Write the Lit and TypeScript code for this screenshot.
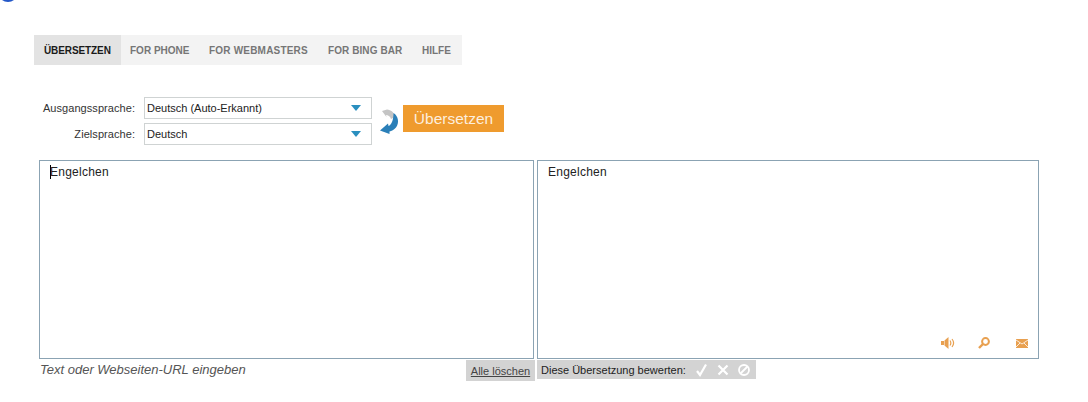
import { LitElement, html, css } from "lit";
import { customElement } from "lit/decorators.js";

@customElement("app-root")
export class AppRoot extends LitElement {
  static styles = css`
    :host { display: block; width: 1088px; height: 402px; overflow: hidden; position: relative; background: #fff; font-family: "Liberation Sans", Arial, sans-serif; color: #222; }
    .logo { position: absolute; left: -2px; top: -18px; width: 20px; height: 20px; border-radius: 50%; background: #2458c8; }
    .page { display: flex; flex-direction: column; padding: 35px 0 0 34px; }
    .tabs { display: flex; align-self: flex-start; background: #f3f3f3; height: 30px; }
    .tab { box-sizing: border-box; display: flex; align-items: center; font-size: 10px; font-weight: 700; color: #767676; white-space: nowrap; }
    .tab.active { background: #e3e3e3; color: #1a1a1a; width: 87px; padding-left: 10px; letter-spacing: -0.1px; }
    .phone { width: 78px; padding-left: 9px; }
    .web { width: 120px; padding-left: 10px; letter-spacing: 0.2px; }
    .bing { width: 93px; padding-left: 9px; letter-spacing: 0.08px; }
    .help { width: 50px; padding-left: 10px; }
    .form { display: flex; margin: 32px 0 0 0; height: 48px; }
    .labels { display: flex; flex-direction: column; gap: 4px; width: 101px; }
    .labels span { height: 22px; line-height: 22px; text-align: right; font-size: 11px; color: #333; letter-spacing: 0.06px; }
    .selects { display: flex; flex-direction: column; gap: 4px; margin-left: 9px; width: 228px; }
    .select { box-sizing: border-box; height: 22px; border: 1px solid #cfd3d3; display: flex; align-items: center; justify-content: space-between; padding: 0 10px 0 2px; font-size: 11px; color: #222; }
    .tri { width: 0; height: 0; border-left: 5px solid transparent; border-right: 5px solid transparent; border-top: 6px solid #2a8fbf; }
    .swap { width: 20px; height: 25px; margin: 12px 3px 0 8px; }
    .go { box-sizing: border-box; width: 101px; height: 27px; margin-top: 8px; background: #ef9b2e; color: rgba(255, 255, 255, 0.85); font-size: 15.5px; display: flex; align-items: center; justify-content: center; border: 0; padding: 0; font-family: inherit; }
    .panels { display: flex; margin: 15px 0 0 5px; gap: 3px; }
    .col { display: flex; flex-direction: column; }
    .box { box-sizing: border-box; height: 199px; border: 1px solid #8ba3b3; font-size: 12px; color: #222; line-height: 14px; letter-spacing: 0.25px; }
    .left .box { width: 495px; padding: 4px 10px; }
    .right .box { width: 502px; padding: 4px 10px; display: flex; flex-direction: column; justify-content: space-between; }
    .caret { display: inline-block; width: 1px; height: 14px; background: #000; vertical-align: -3px; margin-right: -1px; }
    .actions { display: flex; justify-content: flex-end; align-items: center; margin: 0 0 5px 0; color: #e8a050; height: 12px; }
    .actions svg { display: block; }
    .speaker { margin-right: 22px; }
    .lens { margin-right: 25px; }
    .under { display: flex; justify-content: space-between; align-items: flex-start; height: 22px; }
    .hint { font-size: 13px; font-style: italic; color: #555; margin: 3px 0 0 1px; }
    .clear { box-sizing: border-box; width: 69px; height: 21px; margin-top: 1px; margin-right: -1px; background: #d3d3d3; font-size: 11px; color: #444; text-decoration: underline; display: flex; align-items: center; justify-content: center; }
    .rate { display: flex; align-items: center; gap: 8px; align-self: flex-start; height: 19px; margin-top: 1px; width: 219px; box-sizing: border-box; padding-left: 4px; background: #d3d3d3; font-size: 11px; color: #222; }
    .rate svg { display: block; }
    .icons { display: flex; gap: 7px; margin-left: 1px; }
  `;

  render() {
    return html`
      <div class="logo"></div>
      <div class="page">
        <nav class="tabs">
          <div class="tab active">ÜBERSETZEN</div>
          <div class="tab phone">FOR PHONE</div>
          <div class="tab web">FOR WEBMASTERS</div>
          <div class="tab bing">FOR BING BAR</div>
          <div class="tab help">HILFE</div>
        </nav>
        <div class="form">
          <div class="labels"><span>Ausgangssprache:</span><span>Zielsprache:</span></div>
          <div class="selects">
            <div class="select">Deutsch (Auto-Erkannt)<i class="tri"></i></div>
            <div class="select">Deutsch<i class="tri"></i></div>
          </div>
          <svg class="swap" viewBox="0 0 20 25">
            <path d="M2 2 L7 0.5 C11 1 14 3 15 8 L11 10 C10 7 8 6 6 6 L6.5 8 Z" fill="#c4c4c4"/>
            <path d="M13.5 4 C18.5 7 19.5 14 16 18.5 C14 21 11.5 22 9.5 22.5 L9.5 25 L0 21.5 L8 14.5 L8.5 17 C11.5 16 13.5 11 13.5 4 Z" fill="#2a7fb8"/>
          </svg>
          <button class="go">Übersetzen</button>
        </div>
        <div class="panels">
          <div class="col left">
            <div class="box"><i class="caret"></i>Engelchen</div>
            <div class="under">
              <span class="hint">Text oder Webseiten-URL eingeben</span>
              <span class="clear">Alle löschen</span>
            </div>
          </div>
          <div class="col right">
            <div class="box">
              <span>Engelchen</span>
              <div class="actions">
                <svg class="speaker" width="14" height="12" viewBox="0 0 14 12" fill="currentColor"><rect x="0" y="4" width="3" height="4"/><path d="M3.5 3.5 L7.5 0 V12 L3.5 8.5 Z"/><path d="M9 3.5 C10 5 10 7 9 8.5 M11 2 C13 4.5 13 7.5 11 10" fill="none" stroke="currentColor" stroke-width="1.2"/></svg>
                <svg class="lens" width="14" height="12" viewBox="0 0 14 12" fill="none" stroke="currentColor"><circle cx="8.5" cy="4.5" r="3.4" stroke-width="2"/><path d="M6 7 L2 11" stroke-width="2.4"/></svg>
                <svg width="12" height="9" viewBox="0 0 12 9"><rect width="12" height="9" fill="currentColor"/><path d="M0 1 L6 5 L12 1 M0 8 L4 4 M12 8 L8 4" fill="none" stroke="#fff" stroke-width="0.8"/></svg>
              </div>
            </div>
            <div class="rate">
              <span>Diese Übersetzung bewerten:</span>
              <div class="icons">
                <svg width="14" height="14" viewBox="0 0 14 14" fill="none" stroke="#fff" stroke-width="2.2"><path d="M2 8 L5 12 L11 1.5"/></svg>
                <svg width="14" height="14" viewBox="0 0 14 14" fill="none" stroke="#fff" stroke-width="2.2"><path d="M2.5 2.5 L11.5 11.5 M11.5 2.5 L2.5 11.5"/></svg>
                <svg width="14" height="14" viewBox="0 0 14 14" fill="none" stroke="#fff" stroke-width="1.8"><circle cx="7" cy="7" r="5"/><path d="M3.5 10.5 L10.5 3.5"/></svg>
              </div>
            </div>
          </div>
        </div>
      </div>
    `;
  }
}
